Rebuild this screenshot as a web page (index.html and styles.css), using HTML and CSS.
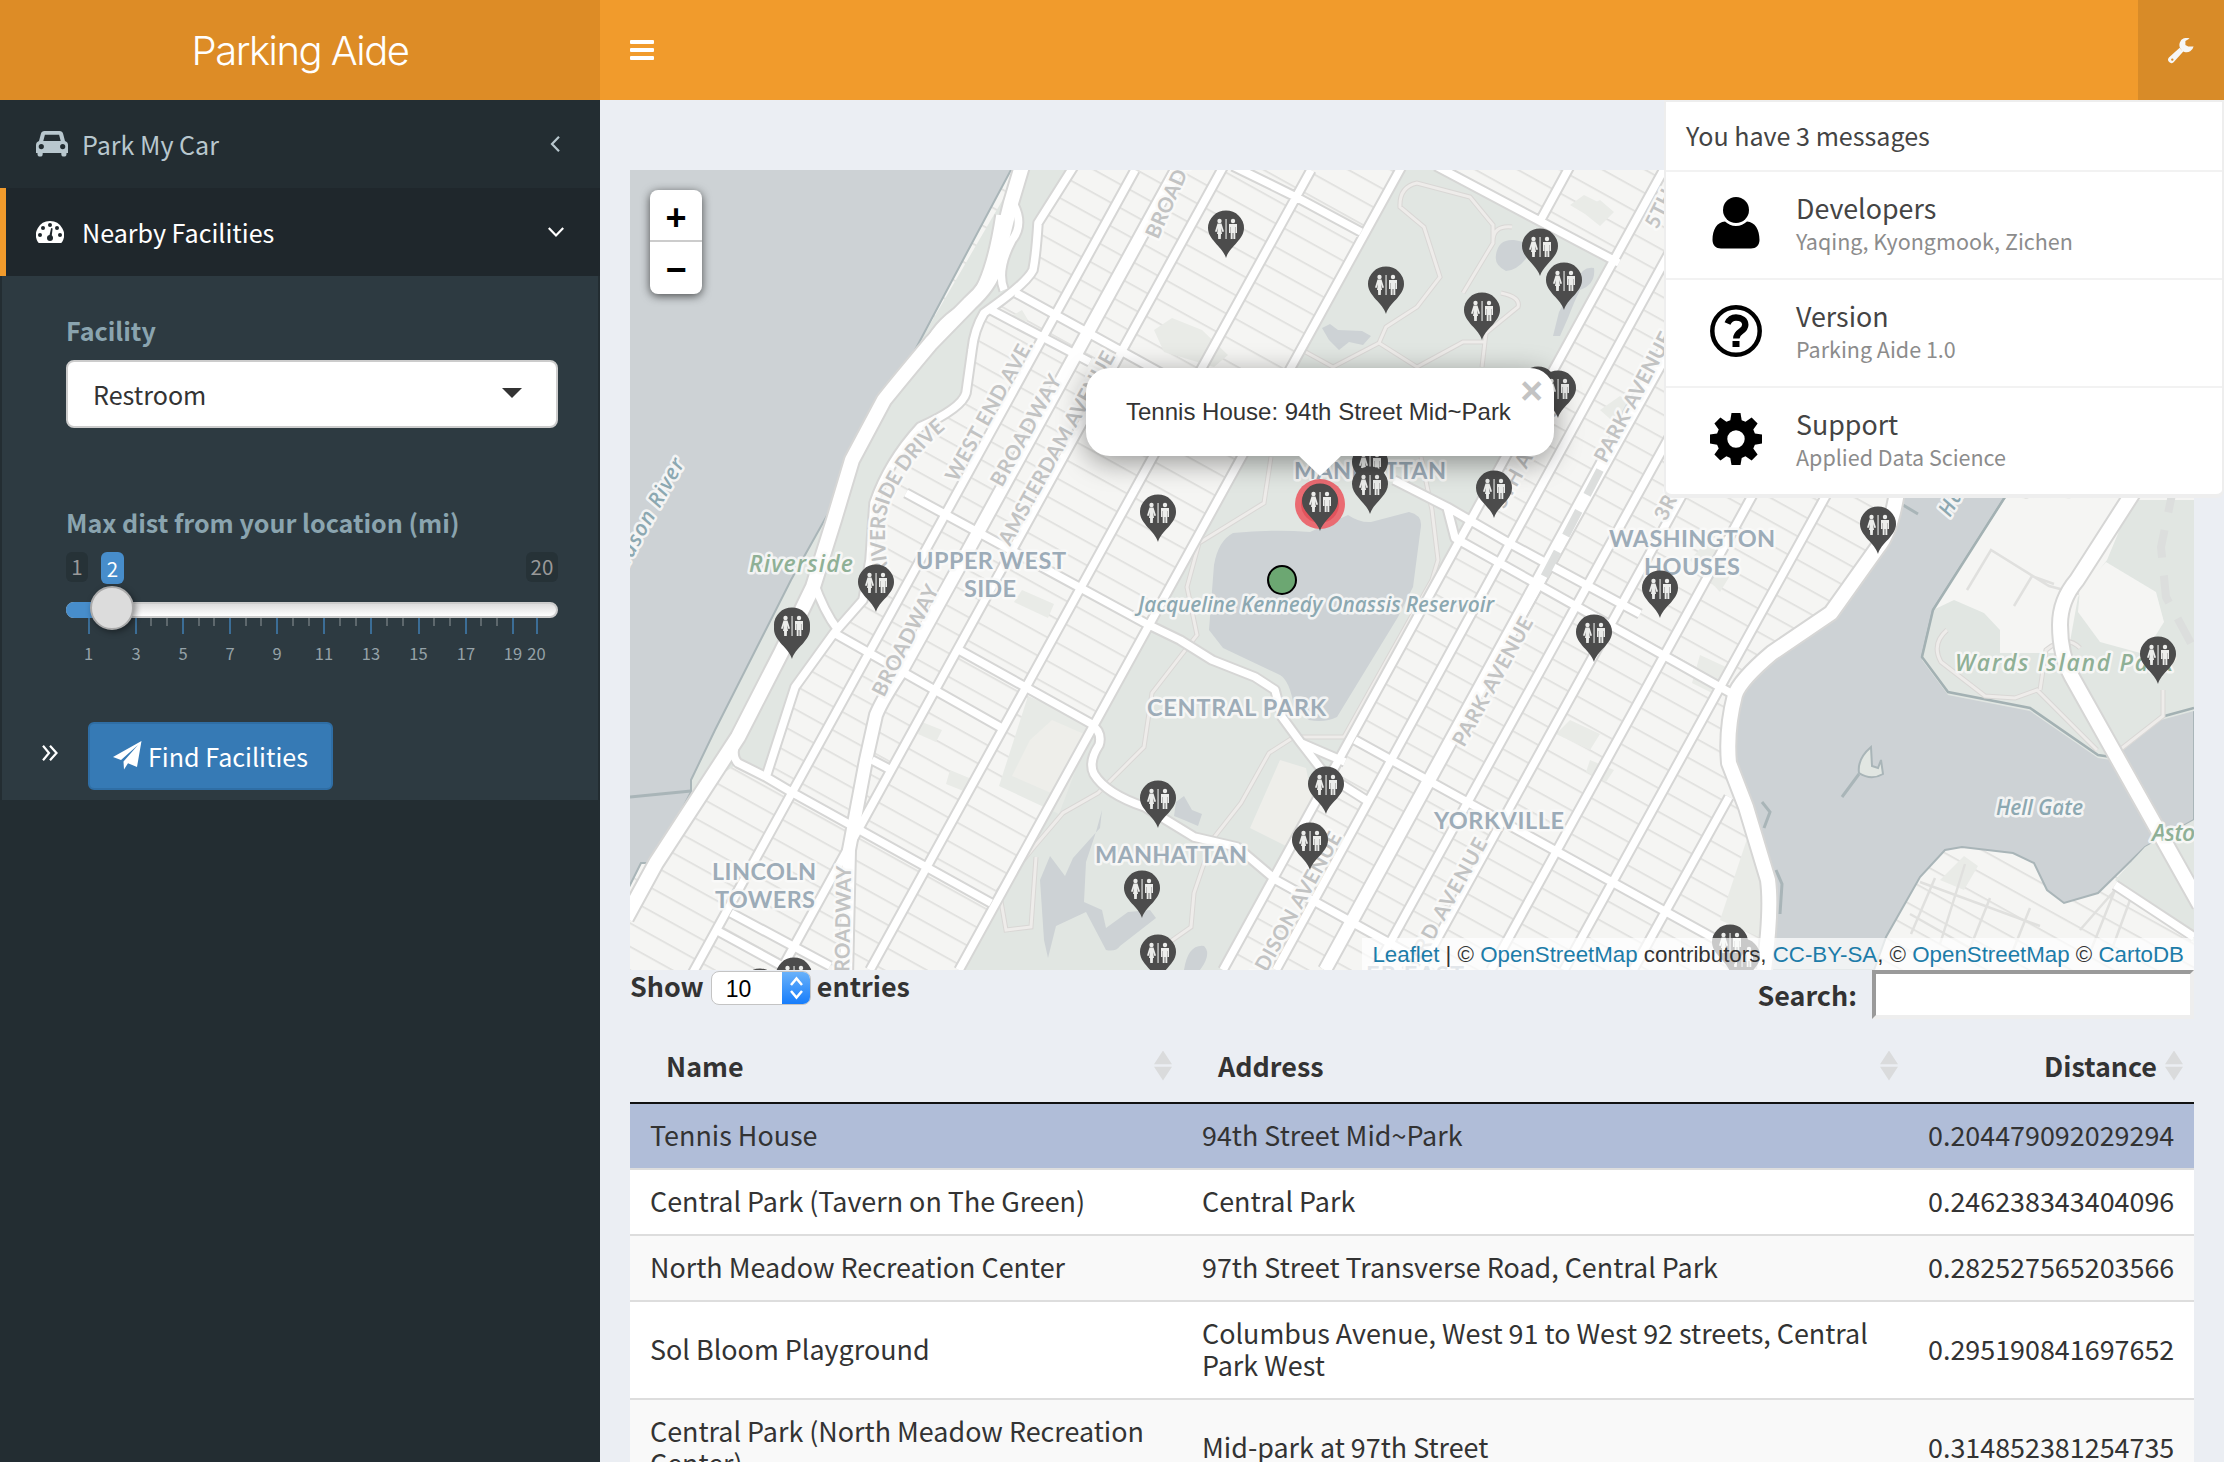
FILE: index.html
```html
<!DOCTYPE html>
<html lang="en">
<head>
<meta charset="utf-8">
<title>Parking Aide</title>
<link rel="stylesheet" href="styles.css">
</head>
<body>
<header class="header">
  <div class="logo">Parking Aide</div>
  <nav class="navbar">
    <span class="toggle"><i></i><i></i><i></i></span>
    <div class="tools">
      <svg class="ic-wrench" viewBox="0 0 26 26"><path fill="#f6f6f6" fill-rule="evenodd" d="M15.500 13.200 5.600 24.200a3.300 3.300 0 0 1-4.700-4.600L11.700 9.800a7 7 0 0 0 3.800 3.400zM4.300 20.400a1.200 1.200 0 1 0 0 2.400 1.200 1.200 0 0 0 0-2.400z"/><path fill="#f6f6f6" d="M25.600 8.600a7.200 7.200 0 1 1-4-8.100l-4.200 2.600v3.800l2.800 1.600z"/></svg>
      <div class="menu">
        <div class="menu-head">You have 3 messages</div>
        <div class="msg">
          <svg viewBox="0 0 52 52"><ellipse cx="26" cy="13" rx="13" ry="13"/><path d="M15 24.500c3 2.600 6.500 4.500 11 4.500s8-1.900 11-4.500c8 .5 12.500 8 12.500 18.500 0 5-3.500 8.500-8.500 8.500H11c-5 0-8.500-3.500-8.500-8.500C2.500 32.500 7 25 15 24.500z"/></svg>
          <div><h4>Developers</h4><p>Yaqing, Kyongmook, Zichen</p></div>
        </div>
        <div class="msg">
          <svg viewBox="0 0 52 52"><circle cx="26" cy="26" r="23.700" fill="none" stroke="#000" stroke-width="4.500"/><path d="M22.500 36h7v6h-7z"/><path d="M17.500 18.500c2-4.500 5-6 8.500-6 5.500 0 9.300 3 9.300 7.300 0 7.200-9 6.200-9 13.700" fill="none" stroke="#000" stroke-width="6.400"/></svg>
          <div><h4>Version</h4><p>Parking Aide 1.0</p></div>
        </div>
        <div class="msg">
          <svg viewBox="0 0 52 52"><path fill-rule="evenodd" d="M21.500 0h9l1.200 7.200 3.800 1.600L41.600 4.500l6 6-4.300 6 1.600 3.900L52 21.500v9l-7.100 1.200-1.600 3.800 4.300 6.100-6 6-6.100-4.300-3.800 1.600L30.500 52h-9l-1.200-7.100-3.900-1.600-6 4.300-6-6 4.300-6.100-1.600-3.800L0 30.500v-9l7.100-1.100 1.600-3.900-4.300-6 6-6 6 4.300 3.900-1.600zM26 17.300a8.700 8.700 0 1 0 0 17.400 8.700 8.700 0 0 0 0-17.400z"/></svg>
          <div><h4>Support</h4><p>Applied Data Science</p></div>
        </div>
      </div>
    </div>
  </nav>
</header>
<div class="wrapper">
  <aside class="sidebar">
    <a class="item">
      <svg class="ic-car" viewBox="0 0 32 26"><path fill="#b8c7ce" fill-rule="evenodd" d="M8.500 0h15c2 0 3 1 3.600 2.800L29 10c2 .7 3 2 3 4v8h-1.500v1a2.600 2.600 0 0 1-5.200 0v-1H6.700v1a2.600 2.600 0 0 1-5.200 0v-1H0v-8c0-2 1-3.300 3-4l1.900-7.200C5.500 1 6.500 0 8.500 0zm.4 3.700L7.300 10h17.400l-1.600-6.300zM5.300 13a2.600 2.600 0 1 0 0 5.200 2.600 2.600 0 0 0 0-5.200zm21.400 0a2.600 2.600 0 1 0 0 5.200 2.600 2.600 0 0 0 0-5.200z"/></svg>
      <span>Park My Car</span>
      <svg class="chev" viewBox="0 0 16 16"><path d="M11 .8 4 8l7 7.200"/></svg>
    </a>
    <a class="item active">
      <svg class="ic-dash" viewBox="0 0 28 22"><path fill="#fff" d="M14 0a14 14 0 0 1 12 21.300q-.4.700-1.200.7H3.200q-.8 0-1.200-.7A14 14 0 0 1 14 0z"/><g fill="#1f272c"><circle cx="4" cy="14" r="2"/><circle cx="7" cy="7" r="2"/><circle cx="14" cy="4" r="2"/><circle cx="21" cy="7" r="2"/><circle cx="24" cy="14" r="2"/><circle cx="14" cy="17" r="3"/><path d="m13 16 2.200-9 1.400.4L15.500 17z"/></g></svg>
      <span>Nearby Facilities</span>
      <svg class="chev" viewBox="0 0 16 16"><path d="M.8 4 8 11.500 15.200 4"/></svg>
    </a>
    <div class="sub">
      <label class="lab">Facility</label>
      <div class="select">Restroom<i class="caret"></i></div>
      <label class="lab lab2">Max dist from your location (mi)</label>
      <div class="badges"><b class="mm">1</b><b class="cur">2</b><b class="mm max">20</b></div>
      <div class="track"><i class="fill"></i><i class="knob"></i></div>
      <svg class="grid" viewBox="66 618 492 54">
        <path stroke="#3b6d96" stroke-width="2" d="M89 618v16M136 618v16M183 618v16M230 618v16M277 618v16M324 618v16M371 618v16M419 618v16M466 618v16M513 618v16M537 618v16"/>
        <path stroke="#6d777b" stroke-width="1.500" d="M151 618v8M167 618v8M199 618v8M214 618v8M246 618v8M261 618v8M293 618v8M309 618v8M340 618v8M356 618v8M387 618v8M403 618v8M434 618v8M450 618v8M481 618v8M497 618v8"/>
        <g class="nums"><text x="88.500" y="660">1</text><text x="136" y="660">3</text><text x="183" y="660">5</text><text x="230" y="660">7</text><text x="277" y="660">9</text><text x="324" y="660">11</text><text x="371" y="660">13</text><text x="418.500" y="660">15</text><text x="466" y="660">17</text><text x="513" y="660">19</text><text x="536.500" y="660">20</text></g>
      </svg>
      <div class="find">
        <svg class="ic-dbl" viewBox="0 0 16 16"><path d="M1 .8 7 8l-6 7.200M8 .8 14.500 8 8 15.200"/></svg>
        <span class="btn"><svg viewBox="0 0 29 29"><path fill="#fff" d="M28.500 0 24 26l-9-3.700-4 6.300-.5-8L25 4 8 19 0 16z"/></svg>Find Facilities</span>
      </div>
    </div>
  </aside>
  <main class="content">
    <div class="map">
      <svg class="tiles" viewBox="630 170 1564 800">
        <defs>
          <pattern id="blocks" width="60" height="23.500" patternUnits="userSpaceOnUse" patternTransform="skewY(29)"><path d="M0 10h60" stroke="#e2e2e0" stroke-width="2.200"/></pattern>
          <g id="pin"><path fill="#4c4c4c" d="M0 0C-3-11-18-18-18-30a18 17.500 0 0 1 36 0C18-18 3-11 0 0z"/><g fill="#ecedeb"><circle cx="-6.500" cy="-37" r="2.200"/><path d="M-8.500-34.500h4l2.500 8-1.600.6L-5-30l1 6h-1l-.2 5h-2.600l-.2-5h-1l1-6-1.400 4.100-1.600-.6zM-.5-39h1.100v20H-.5z"/><circle cx="7" cy="-37" r="2.200"/><path d="M3-34h8v9H9.600V-31H9.300v12H7.400v-6h-.8v6H4.700v-12h-.3v6H3z"/></g></g>
          <path id="rsd" d="M889 574Q878 515 897 488Q915 452 950 425"/>
        </defs>
        <rect x="630" y="170" width="1564" height="800" fill="#f5f5f3"/>
        <rect x="630" y="170" width="1564" height="800" fill="url(#blocks)"/>
        <g fill="#e9ebe7">
          <path d="M1154 330l18-12 30 12 26 25-14 12-50-15zM1008 318l14-8 6 10-12 6zM1580 210l20-10 14 12-14 14zM1600 410l20-14 14 10-16 20zM1022 590l32 14-6 14-34-16zM1570 205l14-10 24 12-8 16zM1690 560l16-18 30 24-16 26zM1700 655l26 12-10 28-24-12zM1720 920l30-90 22 40-6 70zM922 722l20 8-6 12-18-8zM950 770l24 10-8 12-20-8zM1570 720l30 14-10 16-34-16zM1590 760l24 10-8 12-20-10zM2020 545l30-30 20 10-20 40zM1940 880l24-24 14 10-14 24z"/>
        </g>
        <!-- parks -->
        <g fill="#e1e6e2">
          <path d="M1400 170h38l176 90-391 710H961z"/>
          <path d="M1020 170h54l-36 53-5 47-49 43-12 37-6 43-46 34-46 76-4 57-7 40-29 33-39 54-29 86-28-10-24 17-85 138v-20l61-120 0-10 24-50 143-265 23-43z"/>
          <path d="M1028 696l65 28-34 90-60-28z" fill="#e7eae6"/>
        </g>
        <path d="M1030 740l22-20 32 14-26 62-46-20zM1280 760l26 8 8 40-24 40-40-20z" fill="#eeeeea"/>
        <!-- water -->
        <g fill="#cdd2d5">
          <path stroke="#a9b5b8" stroke-width="2" d="M628 168h384l-81 152-25 47-72 136-43 77-76 150-24 50v12l-37 71h-13l-13 26z"/>
          <path stroke="#a9b5b8" stroke-width="2" d="M1895 497h110l-72 113-11 47 26 35 82 16 68 47 13 2 50-40 33-9v112l-49 27-47 46-34 10-17-13-13-27-21-10-51-6-17 3-25 27-34 60-12 33h-104l-2-33 0-57-22-73-17-44v-50l13-33 30-27 59-40 47-66 17-50z"/>
          <path d="M1233 533q40-4 77-1l38-17q12 8 23 7l38-10q13 3 12 14l-8 61-15 30-61 100q-12 6-28 3-12-10-15-13-4-26-14-32l-57-27-14-18 5-65q4-24 19-32z"/>
          <path d="M1496 255q2-16 18-15 18 2 14 16-10 14-22 15-12-6-10-16zM1578 280q4-14 16-12 2 16-14 22-6 12-12 28l-8 18h-7l6-24 10-18zM1322 328l8-4 8 6 24 1 9 5-8 9-14-3-10 8-10-10zM1102 810l-2 18-27 30-8 18-15-20-10 24 4 60 4 18 8-32 30-14 20 38q10 2 14-4l36-28-6-8-22 2-22 16-4-18-18-8 2-40 10-30zM1176 802l8-6 8 14 10 4-4 12-14-6-10-4zM1184 970q4-26 20-24 8 8-4 24z"/>
        </g>
        <path d="M2005 499l189-2v211l-33 9-50 40-13-2-68-47-82-16-26-35 11-47z" fill="#f5f5f3"/>
        <path d="M1933 610l21-10 30 13 16 17v23h68l10-56 29-37 25-60h62v211l-33 9-50 40-13-2-68-47-82-16-26-35z" fill="#e1e6e2"/>
        <path d="M2080 590l26-28 50 30 8 30-20 32-44-12-22-30z" fill="#f5f5f3"/>
        <path d="M2194 820l-49 27-30 33 79 62z" fill="#e1e6e2"/>
        <path d="M2005 497l-72 113-11 47 26 35 82 16 68 47 13 2 50-40 33-9" fill="none" stroke="#a3b1b3" stroke-width="2.500"/>
        <path d="M1871 747q-14 12-12 26 12 8 24 1l-2-14-3 8-6-2z" fill="#e1e6e2" stroke="#a9b5b8" stroke-width="2"/>
        <path d="M1859 774l-17 23M630 797l61-6M1898 502l20 12M1762 802l8 10-6 16M1776 870l6 14-2 30" fill="none" stroke="#a9b5b8" stroke-width="3"/>
        <path d="M1967 590l24-40 58 36 30 8M2014 606l18-30 22 8M1920 882l120 44M1935 878l-24 56M1965 864l-25 80M1990 898l-24 60M2030 908l-20 50M1910 914l60 34M2115 890l-24 60M2130 900l-22 60M2080 930l35-40" fill="none" stroke="#e0e0de" stroke-width="2.500"/>
        <!-- park paths -->
        <path fill="none" stroke="#d9d7d5" stroke-width="5" d="M1512 227q-20-2-19 16l-30 50M1493 243v-18l-23-28-53-14q-18 4-17 24l24 20 16 50-23 30-31 20-7 16-46 24-31-17M1501 293q20 4 17 14l-32 26-4 34M1379 343l38 24 46-25h23M1271 457l-7 46-65 40-12 44 10 48-45 58-8 54-46 46-35 20-29 34-35 43 7 40 25-3 5-70M1421 457l11 53 6 50-6 20-45 80-43 77h-50l-25 16-28 50-29 37-18 53-3 34-47 33M1947 630q-16 14-6 32l44 34 30 2 22-8 60 60M2040 690l6-40q20-16 34-2M2163 690v26l-46 36"/>
        <path fill="none" stroke="#eeecea" stroke-width="3" d="M1512 227q-20-2-19 16l-30 50M1493 243v-18l-23-28-53-14q-18 4-17 24l24 20 16 50-23 30-31 20-7 16-46 24-31-17M1501 293q20 4 17 14l-32 26-4 34M1379 343l38 24 46-25h23M1271 457l-7 46-65 40-12 44 10 48-45 58-8 54-46 46-35 20-29 34-35 43 7 40 25-3 5-70M1421 457l11 53 6 50-6 20-45 80-43 77h-50l-25 16-28 50-29 37-18 53-3 34-47 33M1947 630q-16 14-6 32l44 34 30 2 22-8 60 60M2040 690l6-40q20-16 34-2M2163 690v26l-46 36"/>
        <!-- streets: a grey casing below a white surface -->
        <g fill="none" stroke-linejoin="round">
          <path class="case" d="M1135 170 691 976M1227 160 781 970M1311 170 870 970M1402 166 959 970M1668 162 1223 970M1719 162 1276 970M1774 162 1325 970M1814 175 1375 970M1867 160 1420 970M1936 162 1491 970M2003 175 1564 970M1729 797 1633 970M1436 166 1619 263M1539 223 1570 166M1233 166 1296 197 1361 232M1016 293 1141 362M991 310 1090 362M1141 362 1300 450M906 493 1145 623 1180 640 1212 660 1255 677 1275 690 1282 717 1301 743 1345 762M1301 743 1325 774 1366 800M1394 480 1447 507 1509 543 1640 614M1447 507 1455 538 1720 687 1738 697M1355 740 1717 940M834 633 1000 727M959 650 1090 723Q1103 732 1099 745 1088 762 1094 774 1106 794 1145 807L1194 837 1237 847 1276 880 1420 960M738 737Q730 755 738 763L766 777 793 793 991 903M872 760 891 770M731 913 830 966M716 930 784 967M1074 166 1038 223Q1036 255 1033 270 1026 284 984 313 974 330 972 350L966 393Q962 408 920 427 888 462 874 503L870 560 863 600 834 633 795 687 766 777M813 580Q824 612 838 630M1000 215Q990 280 972 300M1014 205Q1024 225 1012 240 996 270 1004 290M928 345Q940 320 968 305M2115 885 2194 937"/>
          <path class="case big" d="M1177 170 959 567 902 670Q882 700 876 715L866 760 849 850 846 976M1875 -33 1325 970"/>
          <path class="case fwy" d="M1022 166 1011 203 995 267Q990 285 970 303L931 343Q900 380 884 400L852 460 834 520 813 587 781 653 738 737 656 863 626 918M1898 485Q1892 530 1878 547L1831 613 1772 653Q1740 680 1735 695 1726 730 1729 763L1746 807 1768 880Q1772 910 1764 970M2138 485 2077 580Q2060 600 2060 625 2060 655 2072 677L2200 905"/>
          <path class="road" d="M1135 170 691 976M1227 160 781 970M1311 170 870 970M1402 166 959 970M1668 162 1223 970M1719 162 1276 970M1774 162 1325 970M1814 175 1375 970M1867 160 1420 970M1936 162 1491 970M2003 175 1564 970M1729 797 1633 970M1436 166 1619 263M1539 223 1570 166M1233 166 1296 197 1361 232M1016 293 1141 362M991 310 1090 362M1141 362 1300 450M906 493 1145 623 1180 640 1212 660 1255 677 1275 690 1282 717 1301 743 1345 762M1301 743 1325 774 1366 800M1394 480 1447 507 1509 543 1640 614M1447 507 1455 538 1720 687 1738 697M1355 740 1717 940M834 633 1000 727M959 650 1090 723Q1103 732 1099 745 1088 762 1094 774 1106 794 1145 807L1194 837 1237 847 1276 880 1420 960M738 737Q730 755 738 763L766 777 793 793 991 903M872 760 891 770M731 913 830 966M716 930 784 967M1074 166 1038 223Q1036 255 1033 270 1026 284 984 313 974 330 972 350L966 393Q962 408 920 427 888 462 874 503L870 560 863 600 834 633 795 687 766 777M813 580Q824 612 838 630M1000 215Q990 280 972 300M1014 205Q1024 225 1012 240 996 270 1004 290M928 345Q940 320 968 305M2115 885 2194 937"/>
          <path class="road big" d="M1177 170 959 567 902 670Q882 700 876 715L866 760 849 850 846 976M1875 -33 1325 970"/>
          <path class="road fwy" d="M1022 166 1011 203 995 267Q990 285 970 303L931 343Q900 380 884 400L852 460 834 520 813 587 781 653 738 737 656 863 626 918M1898 485Q1892 530 1878 547L1831 613 1772 653Q1740 680 1735 695 1726 730 1729 763L1746 807 1768 880Q1772 910 1764 970M2138 485 2077 580Q2060 600 2060 625 2060 655 2072 677L2200 905"/>
          <path stroke="#dcdedd" stroke-width="8" stroke-dasharray="28 18" d="M2174 485 2161 547 2166 597 2200 660M1600 470 1540 585"/>
        </g>
        <!-- street names -->
        <g class="sname">
          <text transform="translate(1158 240) rotate(-66)" textLength="120">BROADWAY</text>
          <text transform="translate(957 483) rotate(-61)" textLength="158">WEST END AVE.</text>
          <text transform="translate(1002 488) rotate(-61)" textLength="124">BROADWAY</text>
          <text transform="translate(1010 547) rotate(-61)" textLength="218">AMSTERDAM AVENUE</text>
          <text><textPath href="#rsd" textLength="166">RIVERSIDE DRIVE</textPath></text>
          <text transform="translate(884 698) rotate(-63)" textLength="122">BROADWAY</text>
          <text transform="translate(849 986) rotate(-89)" textLength="120">BROADWAY</text>
          <text transform="translate(1464 748) rotate(-61)" textLength="144">PARK-AVENUE</text>
          <text transform="translate(1606 464) rotate(-62)" textLength="144">PARK-AVENUE</text>
          <text transform="translate(1250 1003) rotate(-61)" textLength="190">MADISON AVENUE</text>
          <text transform="translate(1407 989) rotate(-61)" textLength="167">THIRD AVENUE</text>
          <text transform="translate(1504 510) rotate(-61)" textLength="130">5TH AVENUE</text>
          <text transform="translate(1657 230) rotate(-63)" textLength="130">5TH AVENUE</text>
          <text transform="translate(1666 522) rotate(-63)" textLength="130">3RD AVENUE</text>
        </g>
        <g class="hood">
          <text x="916" y="569" textLength="150">UPPER WEST</text><text x="964" y="597" textLength="52">SIDE</text>
          <text x="1609" y="547" textLength="166">WASHINGTON</text><text x="1644" y="575" textLength="96">HOUSES</text>
          <text x="1294" y="479" textLength="152">MANHATTAN</text><text x="1095" y="863" textLength="152">MANHATTAN</text>
          <text x="1147" y="716" textLength="179">CENTRAL PARK</text><text x="1434" y="829" textLength="130">YORKVILLE</text>
          <text x="712" y="880" textLength="104">LINCOLN</text><text x="715" y="908" textLength="100">TOWERS</text>
          <text x="1366" y="983" textLength="98">ER EAST</text>
        </g>
        <g class="wname">
          <text x="1138" y="612" textLength="356">Jacqueline Kennedy Onassis Reservoir</text>
          <text x="1996" y="815" textLength="87">Hell Gate</text>
          <text transform="translate(618 584) rotate(-61)" textLength="138">Hudson River</text>
          <text transform="translate(1950 518) rotate(-61)" textLength="138">Harlem River</text>
        </g>
        <g class="pname">
          <text x="749" y="572" textLength="104">Riverside</text>
          <text x="1955" y="671" textLength="218">Wards Island Park</text>
          <text x="2152" y="841" textLength="120">Astoria Park</text>
        </g>
        <!-- facilities -->
        <circle cx="1320" cy="504" r="25" fill="#ea6b72"/>
        <circle cx="1320" cy="504" r="19" fill="#e2535c"/>
        <circle cx="1282" cy="580" r="14" fill="#6ca772" stroke="#000" stroke-width="2"/>
        <g transform="translate(0 2)">
          <use href="#pin" x="1226" y="256"/><use href="#pin" x="1386" y="312"/><use href="#pin" x="1540" y="274"/><use href="#pin" x="1564" y="308"/><use href="#pin" x="1482" y="338"/><use href="#pin" x="1538" y="412"/><use href="#pin" x="1558" y="416"/><use href="#pin" x="1370" y="490"/><use href="#pin" x="1370" y="512"/><use href="#pin" x="1494" y="516"/><use href="#pin" x="1158" y="540"/><use href="#pin" x="1320" y="529"/><use href="#pin" x="1660" y="616"/><use href="#pin" x="1594" y="660"/><use href="#pin" x="1878" y="552"/><use href="#pin" x="2158" y="682"/><use href="#pin" x="1742" y="984"/><use href="#pin" x="1730" y="970"/><use href="#pin" x="876" y="610"/><use href="#pin" x="792" y="657"/><use href="#pin" x="792" y="653"/><use href="#pin" x="1158" y="826"/><use href="#pin" x="1142" y="916"/><use href="#pin" x="1158" y="980"/><use href="#pin" x="760" y="1014"/><use href="#pin" x="794" y="1003"/><use href="#pin" x="1326" y="812"/><use href="#pin" x="1310" y="868"/>
        </g>
      </svg>
      <div class="zoom"><span>+</span><span>−</span></div>
      <div class="popup">Tennis House: 94th Street Mid~Park<b>×</b></div>
      <div class="attr"><a>Leaflet</a> | © <a>OpenStreetMap</a> contributors, <a>CC-BY-SA</a>, © <a>OpenStreetMap</a> © <a>CartoDB</a></div>
    </div>
    <div class="controls">
      <div class="show">Show <span class="len">10<svg viewBox="0 0 29 34"><path d="m9 14 5.500-6.500L20 14M9 20l5.500 6.500L20 20"/></svg></span> entries</div>
      <div class="search">Search: <span class="field"></span></div>
    </div>
    <div class="table">
      <div class="tr th"><div>Name<i class="sort"></i></div><div>Address<i class="sort"></i></div><div>Distance<i class="sort"></i></div></div>
      <div class="tr sel"><div>Tennis House</div><div>94th Street Mid~Park</div><div>0.204479092029294</div></div>
      <div class="tr"><div>Central Park (Tavern on The Green)</div><div>Central Park</div><div>0.246238343404096</div></div>
      <div class="tr odd"><div>North Meadow Recreation Center</div><div>97th Street Transverse Road, Central Park</div><div>0.282527565203566</div></div>
      <div class="tr"><div>Sol Bloom Playground</div><div>Columbus Avenue, West 91 to West 92 streets, Central Park West</div><div>0.295190841697652</div></div>
      <div class="tr odd"><div>Central Park (North Meadow Recreation Center)</div><div>Mid-park at 97th Street</div><div>0.314852381254735</div></div>
    </div>
  </main>
</div>
</body>
</html>
```
FILE: styles.css
```css
* { box-sizing: border-box; }
body {
  margin: 0; width: 2224px; height: 1462px; overflow: hidden;
  background: #ebeef3; color: #333;
  font: 26.9px/32px "Noto Sans CJK SC", "Noto Sans", sans-serif;
}
h4, p { margin: 0; font-weight: 400; }
i { font-style: normal; }
svg { display: block; }

.header { display: flex; height: 100px; color: #fff; }
.logo { width: 600px; background: #dd8c26; text-align: center; font: 300 40px/102px Inter, "Liberation Sans", sans-serif; letter-spacing: -1.5px; }
.navbar { flex: 1; background: #f19b2c; display: flex; justify-content: space-between; align-items: center; padding-left: 30px; }
.toggle { display: grid; gap: 4px; width: 24px; }
.toggle i { height: 4px; border-radius: 1px; background: #fff; }
.tools { position: relative; width: 86px; height: 100px; background: #d88b28; display: flex; align-items: center; padding: 2px 0 0 30px; }
.ic-wrench { width: 26px; height: 26px; }
.menu { position: absolute; z-index: 5; top: 100px; right: 0; width: 560px; height: 398px; background: #fff; border: 2px solid #eee; border-bottom-width: 4px; border-radius: 0 0 8px 8px; color: #444; }
.menu-head { height: 70px; padding: 17px 20px; border-bottom: 2px solid #f2f2f2; font-size: 25.1px; }
.msg { display: flex; height: 108px; padding: 25px 0 0 44px; border-bottom: 2px solid #f2f2f2; }
.msg:last-child { border: 0; }
.msg svg { width: 52px; height: 52px; margin-right: 34px; }
.msg h4 { font-size: 26.8px; line-height: 24px; margin-top: -1px; }
.msg p { font-size: 21.5px; line-height: 24px; margin-top: 9px; color: #8c8c8c; }

.wrapper { display: flex; height: 1362px; }
.sidebar { width: 600px; background: #232d32; color: #b8c7ce; font-size: 25.1px; }
.item { display: flex; align-items: center; height: 88px; padding: 0 36px 0 36px; }
.item span { flex: 1; }
.item svg:first-child { margin-right: 14px; }
.active { background: #1f272c; color: #fff; border-left: 6px solid #f19b2c; padding-left: 30px; }
.ic-car { width: 32px; height: 26px; }
.ic-dash { width: 28px; height: 22px; }
.active .ic-dash { margin-right: 18px !important; }
.chev { width: 16px; height: 16px; fill: none; stroke: currentColor; stroke-width: 2.2; }
.sub { margin: 0 2px; height: 524px; background: #2d3a41; padding: 38px 38px 0 64px; color: #fff; }
.lab { display: block; font-weight: 700; color: #8aa4af; }
.select { display: flex; align-items: center; justify-content: space-between; width: 492px; margin-top: 14px; height: 68px; padding: 0 34px 0 25px; background: #fff; border: 2px solid #ccc; border-radius: 8px; color: #333; }
.caret { border: 10px solid transparent; border-top-color: #333; border-bottom: 0; margin-top: -2px; }
.lab2 { margin-top: 78px; }
.badges { display: flex; width: 492px; height: 34px; margin-top: 14px; font-size: 20.500px; line-height: 29px; }
.badges b { font-weight: 400; border-radius: 6px; text-align: center; }
.mm { width: 22px; height: 30px; background: #263237; color: #999; }
.max { width: 32px; margin-left: auto; }
.cur { width: 23px; height: 32px; margin-left: 13px; background: #478dcb; line-height: 33px; }
.track { position: relative; width: 492px; margin-top: 16px; height: 16px; border: 2px solid #ccc; border-radius: 8px; background: linear-gradient(#ddd, #fff); }
.fill { position: absolute; left: -2px; top: -2px; width: 40px; height: 16px; border-radius: 8px 0 0 8px; background: #478dcb; }
.knob { position: absolute; left: 22px; top: -18px; width: 44px; height: 44px; border-radius: 50%; background: #dcdcdc; border: 2px solid #aaa; box-shadow: 2px 2px 6px rgba(0,0,0,.4); }
.grid { width: 492px; height: 54px; }
.nums { font-size: 16.500px; fill: #95a2a8; text-anchor: middle; }
.find { display: flex; margin: 50px 0 0 -24px; }
.ic-dbl { width: 16px; height: 16px; margin: 23px 30px 0 0; fill: none; stroke: #fff; stroke-width: 2.200; }
.btn { display: flex; align-items: center; width: 245px; height: 68px; padding: 0 0 1px 23px; background: #367ab5; border: 2px solid #2f6ea5; border-radius: 6px; white-space: nowrap; }
.btn svg { width: 29px; height: 29px; margin-right: 6px; }

.content { flex: 1; padding: 70px 30px 0; }
.map { position: relative; height: 800px; overflow: hidden; font-family: "Liberation Sans", Arial, sans-serif; }
.tiles { width: 1564px; height: 800px; }
.case { stroke: #d6d6d5; stroke-width: 11.500; }
.road { stroke: #fff; stroke-width: 7.500; }
.case.big { stroke-width: 16; }
.road.big { stroke-width: 12; }
.case.fwy { stroke-width: 18; }
.road.fwy { stroke-width: 14; }
.tiles text { paint-order: stroke; stroke: rgba(250,250,249,.85); stroke-width: 5px; stroke-linejoin: round; }
.sname { font: 700 20.500px Lato, sans-serif; fill: #c2c3c3; }
.hood { font: 700 23.500px Lato, sans-serif; fill: #9dacb8; }
.wname { font: italic 600 21px "Open Sans", sans-serif; fill: #8ca8b1; }
.pname { font: italic 600 23px "Open Sans", sans-serif; fill: #8fb096; }
.zoom { position: absolute; left: 20px; top: 20px; width: 52px; height: 104px; background: #fff; border-radius: 8px; box-shadow: 0 2px 10px rgba(0,0,0,.65); }
.zoom span { display: block; height: 52px; text-align: center; color: #000; font: bold 36px/55px "Liberation Sans", sans-serif; }
.zoom span:first-child { border-bottom: 2px solid #ccc; }
.popup { position: absolute; left: 456px; top: 198px; width: 468px; height: 88px; background: #fff; border-radius: 24px; padding-left: 40px; font-size: 24px; line-height: 87px; white-space: nowrap; box-shadow: 0 6px 28px rgba(0,0,0,.4); }
.popup::after { content: ""; position: absolute; left: 212px; top: 87px; border: 22px solid transparent; border-top: 21px solid #fff; border-bottom: 0; }
.popup b { position: absolute; right: 11px; top: 9px; font-size: 39px; line-height: 28px; color: #c3c3c3; }
.attr { position: absolute; right: 0; bottom: 0; height: 32px; padding: 0 10px; background: rgba(255,255,255,.7); font-size: 22.3px; line-height: 33px; white-space: nowrap; }
.attr a { color: #1d7ca9; }

.controls { display: flex; justify-content: space-between; height: 64px; font-weight: 700; }
.show { display: flex; height: 34px; line-height: 31px; }
.len { position: relative; width: 100px; height: 34px; margin: 1px 6px 0 7px; padding-left: 14px; background: #fff; border: 1px solid #c4c4c4; border-radius: 8px; overflow: hidden; color: #000; font: 23px/34px "Liberation Sans", sans-serif; }
.len svg { position: absolute; right: -1px; top: -1px; width: 29px; height: 34px; background: linear-gradient(#6cb3fa, #147bfb); fill: none; stroke: #fff; stroke-width: 2.500; }
.search { display: flex; line-height: 50px; }
.field { width: 322px; height: 49px; margin-left: 15px; background: #fff; border: 4px solid; border-color: #9a9a9a #eee #eee #9a9a9a; }
.tr { display: grid; grid-template-columns: 552px 1fr 286px; align-items: center; border-bottom: 2px solid #ddd; background: #fff; }
.tr div { padding: 15px 20px 17px; }
.tr div:last-child { text-align: right; }
.odd { background: #f9f9f9; }
.sel { background: #b0bdd8; }
.th { height: 70px; background: none; border-color: #111; font-weight: 700; }
.tr.th div { display: flex; justify-content: space-between; align-items: center; padding: 0 10px 5px 36px; }
.tr.th div:last-child { justify-content: flex-end; gap: 8px; padding-right: 11px; }
.sort { width: 18px; height: 30px; background: #dadbdc; clip-path: polygon(50% 0, 100% 46%, 0 46%, 0 54%, 100% 54%, 50% 100%, 0 54%, 0 46%); }
```
